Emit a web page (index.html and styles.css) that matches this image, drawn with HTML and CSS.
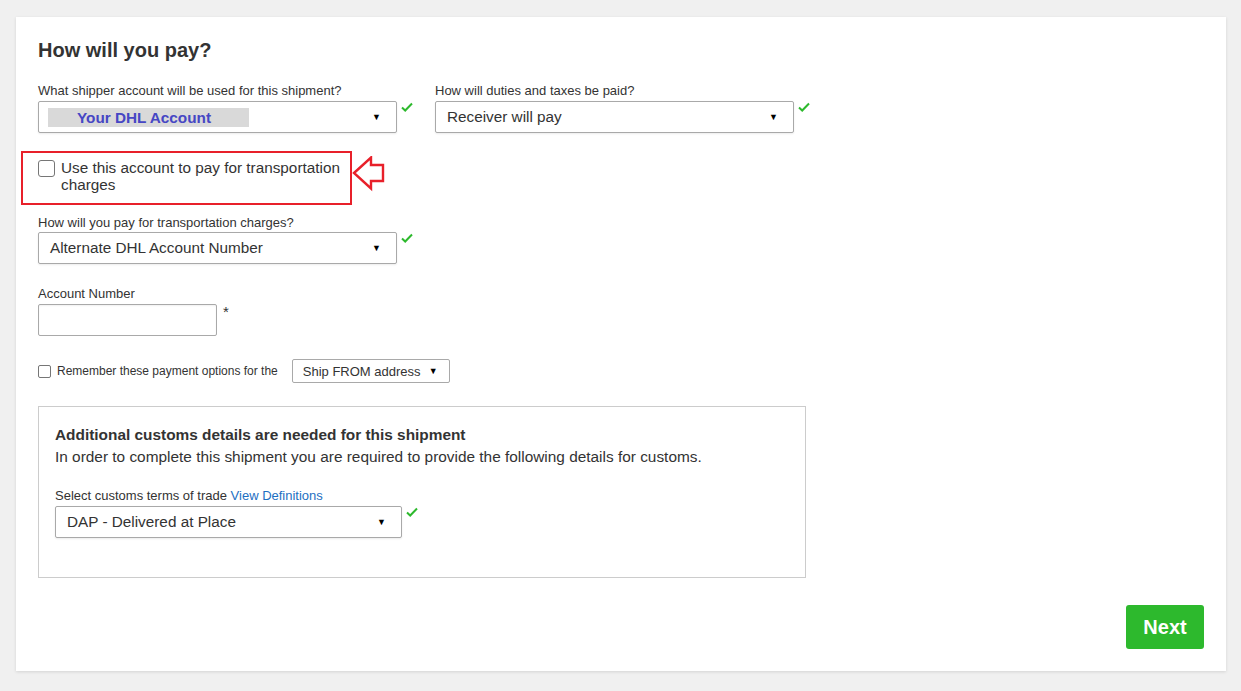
FILE: index.html
```html
<!DOCTYPE html>
<html lang="en">
<head>
    <meta charset="UTF-8">
    <title>How will you pay?</title>
    <link rel="stylesheet" href="styles.css">
</head>
<body>
    <div class="card">
        <h2>How will you pay?</h2>

        <div class="row">
            <div class="field">
                <label>What shipper account will be used for this shipment?</label>
                <div class="with-check">
                    <div class="select wide">
                        <span class="highlight">Your DHL Account</span>
                        <span class="caret">&#9660;</span>
                    </div>
                    <svg class="check" width="12" height="10" viewBox="0 0 12 10"><path d="M1 5.5 L4.2 8.5 L11 1.5" fill="none" stroke="#2db92d" stroke-width="2"/></svg>
                </div>
            </div>
            <div class="field">
                <label>How will duties and taxes be paid?</label>
                <div class="with-check">
                    <div class="select wide">
                        <span>Receiver will pay</span>
                        <span class="caret">&#9660;</span>
                    </div>
                    <svg class="check" width="12" height="10" viewBox="0 0 12 10"><path d="M1 5.5 L4.2 8.5 L11 1.5" fill="none" stroke="#2db92d" stroke-width="2"/></svg>
                </div>
            </div>
        </div>

        <div class="callout">
            <span class="box"></span>
            <span class="callout-text">Use this account to pay for transportation charges</span>
            <svg class="arrow" width="36" height="36" viewBox="0 0 36 36"><path d="M2 17 L19 1.5 L19 9 L31 9 L31 25 L19 25 L19 32.5 Z" fill="#fff" stroke="#e8202a" stroke-width="2.4" stroke-linejoin="miter"/></svg>
        </div>

        <div class="field transport">
            <label>How will you pay for transportation charges?</label>
            <div class="with-check">
                <div class="select wide">
                    <span>Alternate DHL Account Number</span>
                    <span class="caret">&#9660;</span>
                </div>
                <svg class="check" width="12" height="10" viewBox="0 0 12 10"><path d="M1 5.5 L4.2 8.5 L11 1.5" fill="none" stroke="#2db92d" stroke-width="2"/></svg>
            </div>
        </div>

        <div class="field account">
            <label>Account Number</label>
            <div class="with-check">
                <div class="input"></div>
                <span class="required">*</span>
            </div>
        </div>

        <div class="remember">
            <span class="box small"></span>
            <span class="remember-text">Remember these payment options for the</span>
            <div class="select mini">
                <span>Ship FROM address</span>
                <span class="caret">&#9660;</span>
            </div>
        </div>

        <div class="customs">
            <h3>Additional customs details are needed for this shipment</h3>
            <p>In order to complete this shipment you are required to provide the following details for customs.</p>
            <label>Select customs terms of trade <a href="#">View Definitions</a></label>
            <div class="with-check">
                <div class="select terms">
                    <span>DAP - Delivered at Place</span>
                    <span class="caret">&#9660;</span>
                </div>
                <svg class="check" width="12" height="10" viewBox="0 0 12 10"><path d="M1 5.5 L4.2 8.5 L11 1.5" fill="none" stroke="#2db92d" stroke-width="2"/></svg>
            </div>
        </div>

        <div class="actions">
            <button>Next</button>
        </div>
    </div>
</body>
</html>
```

FILE: styles.css
```css
body {
    margin: 0;
    background: #f0f0f0;
    font-family: 'Liberation Sans', Arial, sans-serif;
    color: #333;
}

.card {
    margin: 17px 15px 20px 16px;
    padding: 21px 22px 22px 22px;
    background: #fff;
    box-shadow: 0 1px 3px rgba(0, 0, 0, 0.12);
    display: flex;
    flex-direction: column;
    align-items: flex-start;
}

h2 {
    margin: 0;
    font-size: 20px;
    line-height: 24px;
    font-weight: bold;
    color: #333;
}

label {
    display: block;
    font-size: 13px;
    line-height: 16px;
    color: #333;
    margin-bottom: 2px;
}

.row {
    display: flex;
    gap: 22px;
    margin-top: 21px;
}

.with-check {
    display: flex;
    align-items: flex-start;
}

.check {
    margin: 1px 0 0 4px;
}

.select {
    box-sizing: border-box;
    height: 32px;
    border: 1px solid #a9a9a9;
    border-radius: 2px;
    box-shadow: 0 1px 2px rgba(0, 0, 0, 0.08);
    display: flex;
    align-items: center;
    justify-content: space-between;
    padding: 0 15px 0 11px;
    font-size: 15.3px;
    color: #333;
    background: #fff;
}

.select.wide {
    width: 359px;
}

.select.terms {
    width: 347px;
}

.caret {
    font-size: 9px;
    color: #000;
}

.highlight {
    width: 172px;
    margin-left: -2px;
    padding-left: 29px;
    line-height: 19px;
    background: #d9d9d9;
    color: #4646c4;
    font-weight: bold;
}

.callout {
    position: relative;
    box-sizing: border-box;
    width: 331px;
    height: 54px;
    margin: 18px 0 0 -17px;
    padding: 6px 0 0 15px;
    border: 2px solid #e8202a;
    display: flex;
    align-items: flex-start;
}

.box {
    box-sizing: border-box;
    width: 17px;
    height: 17px;
    border: 1px solid #767676;
    border-radius: 3px;
    background: #fff;
    flex-shrink: 0;
    margin-top: 1px;
}

.box.small {
    width: 13px;
    height: 13px;
    border-radius: 2px;
    margin-top: 0;
}

.callout-text {
    margin-left: 6px;
    width: 285px;
    font-size: 15.3px;
    line-height: 17px;
}

.arrow {
    position: absolute;
    left: 329px;
    top: 3px;
}

.transport {
    margin-top: 10px;
}

.transport label {
    margin-bottom: 1px;
}

.account {
    margin-top: 22px;
}

.input {
    box-sizing: border-box;
    width: 179px;
    height: 32px;
    border: 1px solid #a9a9a9;
    border-radius: 2px;
    box-shadow: inset 0 1px 2px rgba(0, 0, 0, 0.06);
}

.required {
    margin-left: 6px;
    font-size: 15px;
    line-height: 15px;
}

.remember {
    display: flex;
    align-items: center;
    margin-top: 23px;
}

.remember-text {
    font-size: 12px;
    margin-left: 6px;
}

.select.mini {
    width: 158px;
    height: 24px;
    margin-left: 14px;
    padding: 0 11px 0 10px;
    font-size: 13px;
    box-shadow: none;
}

.customs {
    box-sizing: border-box;
    width: 768px;
    height: 172px;
    margin-top: 23px;
    padding: 17px 16px 0 16px;
    border: 1px solid #ccc;
}

h3 {
    margin: 0;
    font-size: 15.4px;
    line-height: 22px;
    font-weight: bold;
    color: #333;
}

.customs p {
    margin: 0 0 20px;
    font-size: 15.4px;
    line-height: 22px;
}

.customs a {
    color: #1d6fc2;
    text-decoration: none;
}

.actions {
    align-self: stretch;
    display: flex;
    justify-content: flex-end;
    margin-top: 27px;
}

button {
    width: 78px;
    height: 44px;
    border: none;
    border-radius: 3px;
    background: #2db92d;
    color: #fff;
    font-family: 'Liberation Sans', Arial, sans-serif;
    font-size: 20px;
    font-weight: bold;
}
```
